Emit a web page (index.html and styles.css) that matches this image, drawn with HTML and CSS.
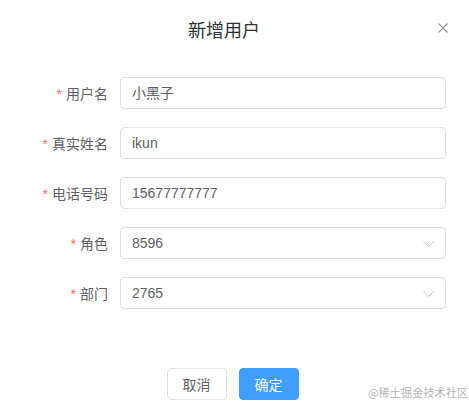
FILE: index.html
```html
<!DOCTYPE html>
<html lang="zh">
<head>
<meta charset="utf-8">
<title>新增用户</title>
<link rel="stylesheet" href="styles.css">
</head>
<body>
<div class="dialog">
  <div class="header">
    <span class="title">新增用户</span>
    <button class="close" aria-label="关闭">
      <svg width="10" height="10" viewBox="0 0 10 10"><path d="M0.5 0.5 L9.5 9.5 M9.5 0.5 L0.5 9.5" stroke="#909399" stroke-width="1.1" fill="none"/></svg>
    </button>
  </div>
  <form class="form">
    <div class="row">
      <label class="label req">用户名</label>
      <div class="input">小黑子</div>
    </div>
    <div class="row">
      <label class="label req">真实姓名</label>
      <div class="input">ikun</div>
    </div>
    <div class="row">
      <label class="label req">电话号码</label>
      <div class="input">15677777777</div>
    </div>
    <div class="row">
      <label class="label req">角色</label>
      <div class="input select"><span>8596</span>
        <svg class="arrow" width="11" height="6" viewBox="0 0 11 6"><path d="M0.5 0.5 L5.5 5.5 L10.5 0.5" stroke="#c0c4cc" stroke-width="1" fill="none"/></svg>
      </div>
    </div>
    <div class="row">
      <label class="label req">部门</label>
      <div class="input select"><span>2765</span>
        <svg class="arrow" width="11" height="6" viewBox="0 0 11 6"><path d="M0.5 0.5 L5.5 5.5 L10.5 0.5" stroke="#c0c4cc" stroke-width="1" fill="none"/></svg>
      </div>
    </div>
  </form>
  <div class="footer">
    <button class="btn">取消</button>
    <button class="btn primary">确定</button>
  </div>
  <div class="watermark">@稀土掘金技术社区</div>
</div>
</body>
</html>
```
FILE: styles.css
```css
* { box-sizing: border-box; }
html, body { margin: 0; padding: 0; background: #fff; }
body {
  font-family: "Liberation Sans", "Noto Sans CJK SC", sans-serif;
  width: 469px;
  height: 411px;
  overflow: hidden;
}
.dialog {
  position: relative;
  width: 469px;
  height: 411px;
}
.header {
  height: 59px;
  display: flex;
  align-items: center;
  justify-content: center;
  padding-bottom: 1px;
  padding-right: 21px;
}
.title {
  font-family: "Noto Sans CJK SC", sans-serif;
  font-size: 18px;
  line-height: 24px;
  color: #303133;
}
.close {
  position: absolute;
  top: 22px;
  left: 437px;
  width: 12px;
  height: 12px;
  padding: 1px;
  border: 0;
  background: none;
  display: flex;
  align-items: center;
  justify-content: center;
}
.form {
  margin: 0;
  padding: 18px 23px 0 0;
  display: flex;
  flex-direction: column;
  gap: 18px;
}
.row {
  display: flex;
  align-items: center;
  height: 32px;
}
.label {
  width: 120px;
  padding-right: 12px;
  text-align: right;
  font-family: "Noto Sans CJK SC", sans-serif;
  font-size: 14px;
  line-height: 20px;
  color: #606266;
}
.req::before {
  content: "*";
  color: #f56c6c;
  margin-right: 4px;
  font-family: "Liberation Sans", sans-serif;
}
.input {
  flex: 1;
  height: 32px;
  border: 1px solid #dcdfe6;
  border-radius: 4px;
  padding: 0 11px;
  display: flex;
  align-items: center;
  font-size: 14px;
  line-height: 20px;
  color: #606266;
}
.select {
  justify-content: space-between;
}
.arrow {
  margin-top: 1px;
}
.footer {
  margin-top: 59px;
  display: flex;
  justify-content: center;
  gap: 12px;
  padding-right: 4px;
}
.btn {
  width: 60px;
  height: 32px;
  border: 1px solid #dcdfe6;
  border-radius: 4px;
  background: #fff;
  color: #606266;
  font-family: "Noto Sans CJK SC", sans-serif;
  font-size: 14px;
  line-height: 20px;
  padding: 0;
}
.primary {
  background: #409eff;
  border-color: #409eff;
  color: #fff;
}
.watermark {
  position: absolute;
  left: 368px;
  top: 385px;
  font-family: "Noto Sans CJK SC", sans-serif;
  font-size: 11px;
  line-height: 14px;
  color: #b3b3b3;
  letter-spacing: 0.2px;
}
```
